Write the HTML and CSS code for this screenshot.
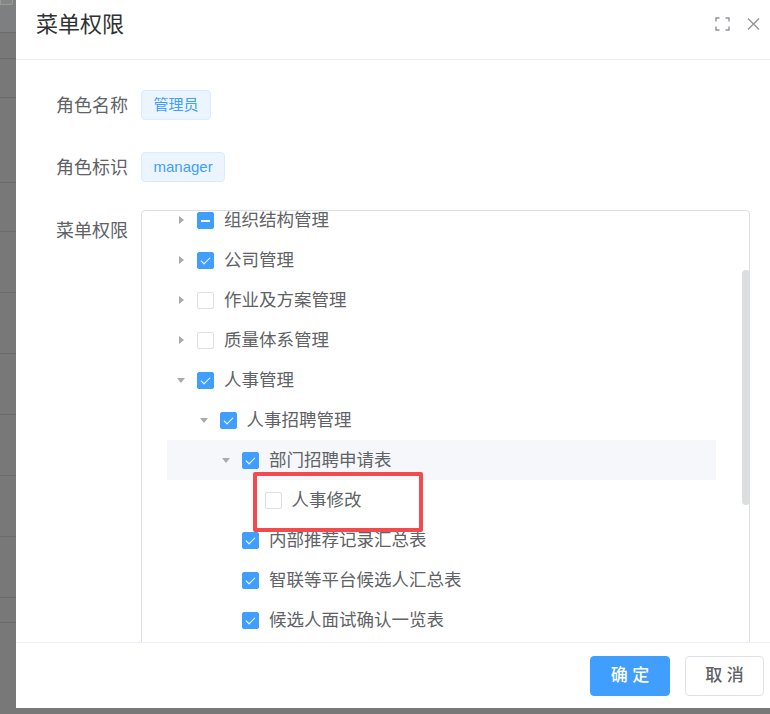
FILE: index.html
```html
<!DOCTYPE html>
<html lang="zh-CN">
  <head>
    <meta charset="UTF-8" />
    <meta name="viewport" content="width=device-width, initial-scale=1.0" />
    <title>菜单权限</title>
    <link rel="stylesheet" href="styles.css">
  </head>
  <body>
    <div class="screen">
      <div class="backdrop">
        <div class="backdrop__row r33"><span class="backdrop__btn"></span></div>
        <div class="backdrop__row r26"></div>
        <div class="backdrop__row r39"></div>
        <div class="backdrop__row r85"></div>
        <div class="backdrop__row r49"></div>
        <div class="backdrop__row r61"></div>
        <div class="backdrop__row r61"></div>
        <div class="backdrop__row r61"></div>
        <div class="backdrop__row r61"></div>
        <div class="backdrop__row r61"></div>
        <div class="backdrop__row r61"></div>
        <div class="backdrop__row r25"></div>
      </div>

      <div class="dialog">
        <header class="dialog__header">
          <span class="dialog__title">菜单权限</span>
          <div class="dialog__tools">
            <svg class="icon-full" width="15" height="14" viewBox="0 0 15 14" fill="none" stroke="currentColor" stroke-width="1.4">
              <path d="M1 4.5V1h3.5M10.5 1H14v3.5M14 9.5V13h-3.5M4.5 13H1V9.5" />
            </svg>
            <svg class="icon-close" width="13" height="12" viewBox="0 0 13 12" fill="none" stroke="currentColor" stroke-width="1.3">
              <path d="M1 0.5l11 11M12 0.5l-11 11" />
            </svg>
          </div>
        </header>

        <div class="dialog__body">
          <div class="form-item">
            <label class="form-item__label">角色名称</label>
            <span class="tag">管理员</span>
          </div>
          <div class="form-item form-item--second">
            <label class="form-item__label">角色标识</label>
            <span class="tag">manager</span>
          </div>
          <div class="form-item form-item--tree">
            <label class="form-item__label">菜单权限</label>
            <div class="tree-box">
              <div class="tree">
                <div class="node lv0">
                  <span class="caret"></span><span class="cb is-half"></span>
                  <span class="node__label">组织结构管理</span>
                </div>
                <div class="node lv0">
                  <span class="caret"></span><span class="cb is-checked"></span>
                  <span class="node__label">公司管理</span>
                </div>
                <div class="node lv0">
                  <span class="caret"></span><span class="cb"></span>
                  <span class="node__label">作业及方案管理</span>
                </div>
                <div class="node lv0">
                  <span class="caret"></span><span class="cb"></span>
                  <span class="node__label">质量体系管理</span>
                </div>
                <div class="node lv0">
                  <span class="caret is-open"></span><span class="cb is-checked"></span>
                  <span class="node__label">人事管理</span>
                </div>
                <div class="node lv1">
                  <span class="caret is-open"></span><span class="cb is-checked"></span>
                  <span class="node__label">人事招聘管理</span>
                </div>
                <div class="node lv2 is-current">
                  <span class="caret is-open"></span><span class="cb is-checked"></span>
                  <span class="node__label">部门招聘申请表</span>
                </div>
                <div class="node lv3">
                  <span class="caret is-leaf"></span><span class="cb"></span>
                  <span class="node__label">人事修改</span>
                </div>
                <div class="node lv2">
                  <span class="caret is-leaf"></span><span class="cb is-checked"></span>
                  <span class="node__label">内部推荐记录汇总表</span>
                </div>
                <div class="node lv2">
                  <span class="caret is-leaf"></span><span class="cb is-checked"></span>
                  <span class="node__label">智联等平台候选人汇总表</span>
                </div>
                <div class="node lv2">
                  <span class="caret is-leaf"></span><span class="cb is-checked"></span>
                  <span class="node__label">候选人面试确认一览表</span>
                </div>
              </div>
              <div class="scroll-thumb"></div>
              <div class="mark"></div>
            </div>
          </div>
        </div>

        <footer class="dialog__footer">
          <button class="btn btn--primary">确 定</button>
          <button class="btn">取 消</button>
        </footer>
      </div>
    </div>
  </body>
</html>
```

FILE: styles.css
```css
:root {
  --clr-primary: #409eff;
  --clr-text: #606266;
  --clr-title: #303133;
  --clr-muted: #909399;
  --clr-border: #dcdfe6;
  --clr-line: #ebeef5;
  --clr-mask: #787878;
}

* {
  margin: 0;
  box-sizing: border-box;
}

body {
  font-family: "Liberation Sans", "Noto Sans CJK SC", sans-serif;
  background: var(--clr-mask);
  overflow: hidden;
  height: 714px;
}

.screen {
  display: flex;
  align-items: flex-start;
}

/* dimmed page behind the dialog */
.backdrop {
  width: 16px;
  flex-shrink: 0;
}

.backdrop__row {
  border-bottom: 1px solid #6b6b6b;
}

.backdrop__btn {
  display: block;
  width: 13px;
  height: 5px;
  border: 1px solid #9a9a9a;
  border-top: none;
  border-radius: 0 0 3px 0;
  background: #858585;
}

.r33 { height: 33px; background: #7e7f80; }
.r26 { height: 26px; }
.r39 { height: 39px; }
.r85 { height: 85px; }
.r49 { height: 49px; }
.r61 { height: 61px; }
.r25 { height: 25px; }

.dialog {
  width: 760px;
  height: 708px;
  flex-shrink: 0;
  background: #fff;
  display: flex;
  flex-direction: column;
}

.dialog__header {
  height: 60px;
  flex-shrink: 0;
  display: flex;
  align-items: flex-start;
  justify-content: space-between;
  padding: 10px 16px 0 20px;
  border-bottom: 1px solid var(--clr-line);
}

.dialog__title {
  font-size: 22px;
  line-height: 30px;
  color: var(--clr-title);
}

.dialog__tools {
  display: flex;
  align-items: center;
  gap: 17px;
  color: var(--clr-muted);
  padding-top: 7px;
}

.dialog__body {
  height: 582px;
  flex-shrink: 0;
  overflow: hidden;
  padding-top: 30px;
}

.form-item {
  display: flex;
  align-items: flex-start;
  margin-bottom: 32px;
}

.form-item--second {
  margin-bottom: 28px;
}

.form-item__label {
  position: relative;
  top: 1px;
  width: 125px;
  flex-shrink: 0;
  padding-left: 40px;
  font-size: 18px;
  line-height: 30px;
  color: var(--clr-text);
}

.form-item--tree .form-item__label {
  line-height: 40px;
}

.tag {
  height: 30px;
  padding: 0 11.5px;
  font-size: 15px;
  line-height: 28px;
  color: var(--clr-primary);
  background: #ecf5ff;
  border: 1px solid #d9ecff;
  border-radius: 4px;
}

.tree-box {
  position: relative;
  width: 609px;
  height: 470px;
  border: 1px solid var(--clr-border);
  border-radius: 4px;
  overflow: hidden;
}

.tree {
  padding: 0 33px 0 25px;
  margin-top: -11px;
}

.node {
  height: 40px;
  display: flex;
  align-items: center;
  font-size: 17.5px;
  color: var(--clr-text);
}

.node.lv0 { padding-left: 6px; }
.node.lv1 { padding-left: 28.5px; }
.node.lv2 { padding-left: 51px; }
.node.lv3 { padding-left: 73.5px; }

.node.is-current {
  background: #f5f7fa;
}

.caret {
  width: 16px;
  height: 16px;
  display: flex;
  align-items: center;
  justify-content: center;
}

.caret::before {
  content: "";
  border-left: 5px solid #a8abb2;
  border-top: 4px solid transparent;
  border-bottom: 4px solid transparent;
}

.caret.is-open {
  transform: rotate(90deg);
}

.caret.is-leaf::before {
  border-left-color: transparent;
}

.cb {
  position: relative;
  width: 17px;
  height: 17px;
  margin-left: 8px;
  border: 1px solid var(--clr-border);
  border-radius: 2px;
  background: #fff;
  flex-shrink: 0;
}

.cb.is-checked,
.cb.is-half {
  background: var(--clr-primary);
  border-color: var(--clr-primary);
}

.cb.is-checked::after {
  content: "";
  position: absolute;
  left: 5px;
  top: 2px;
  width: 4px;
  height: 8px;
  border-right: 1.5px solid #fff;
  border-bottom: 1.5px solid #fff;
  transform: rotate(45deg);
}

.cb.is-half::after {
  content: "";
  position: absolute;
  left: 3px;
  right: 3px;
  top: 7px;
  height: 2px;
  background: #fff;
}

.node__label {
  margin: 2px 0 0 10px;
  line-height: 1;
}

.scroll-thumb {
  position: absolute;
  top: 59px;
  right: -1px;
  width: 8px;
  height: 235px;
  border-radius: 4px;
  background: #dddee0;
}

/* red annotation frame */
.mark {
  position: absolute;
  left: 111px;
  top: 261px;
  width: 170px;
  height: 60px;
  border: 4px solid #f24a4d;
  border-radius: 2px;
}

.dialog__footer {
  flex: 1;
  display: flex;
  justify-content: flex-end;
  gap: 15px;
  padding: 13px 12px 0 0;
  border-top: 1px solid var(--clr-line);
}

.btn {
  font: inherit;
  font-size: 17px;
  font-weight: 500;
  line-height: 1;
  width: 79px;
  height: 40px;
  padding: 0 0 2px;
  color: var(--clr-text);
  background: #fff;
  border: 1px solid var(--clr-border);
  border-radius: 4px;
  cursor: pointer;
}

.btn--primary {
  width: 80px;
  color: #fff;
  background: var(--clr-primary);
  border-color: var(--clr-primary);
}
```
